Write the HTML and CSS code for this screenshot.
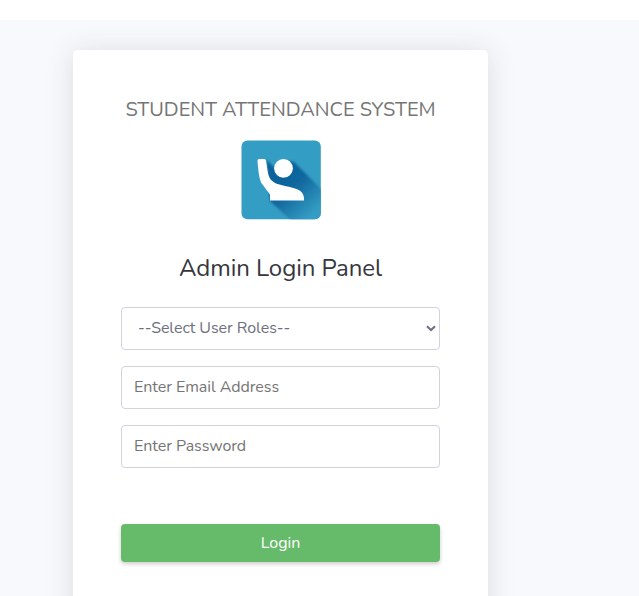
FILE: index.html
```html
<!DOCTYPE html>
<html lang="en">
<head>
<meta charset="utf-8">
<title>Student Attendance System</title>
<link rel="stylesheet" href="styles.css">
</head>
<body>
<main class="page">
  <section class="card">
    <h5 class="system"><span>STUDENT ATTENDANCE SYSTEM</span></h5>
    <svg class="logo" viewBox="0 0 80 80" aria-hidden="true">
      <defs>
        <linearGradient id="shade" gradientUnits="userSpaceOnUse" x1="40" y1="36" x2="73" y2="73">
          <stop offset="0" stop-color="#0c639c"/>
          <stop offset=".35" stop-color="#12689f"/>
          <stop offset="1" stop-color="#349dc3"/>
        </linearGradient>
        <clipPath id="tile"><rect x="0.5" y="0.4" width="79.3" height="78.800" rx="6"/></clipPath>
        <filter id="soft" x="-10%" y="-10%" width="120%" height="120%"><feGaussianBlur stdDeviation=".8"/></filter>
      </defs>
      <g clip-path="url(#tile)">
        <rect width="81" height="80" fill="#349dc3"/>
        <path d="M25.500 20 36 30 48 21 53 22 85 54V84H54L29 61Z" fill="url(#shade)" filter="url(#soft)"/>
      </g>
      <path d="M17.700 19h5.500q1.700 0 1.900 2l1.500 10c1 7 4 11 10 13 7 2.500 16 3 21 6 4 2 5.500 5 5.500 10.500H29V54.500L20 42.500C17.500 36 17.200 28 16.500 21.500Q16.300 19 17.700 19Z" fill="#fff"/>
      <circle cx="42.500" cy="28.300" r="9.400" fill="#fff"/>
    </svg>
    <h1 class="heading"><span>Admin Login Panel</span></h1>
    <form class="form">
      <div class="field select"><span class="roles">--Select User Roles--</span>
        <svg class="arrow" viewBox="0 0 10 7" aria-hidden="true"><path d="M1 1.200 5 5 9 1.200" fill="none" stroke="#6e707e" stroke-width="2"/></svg>
      </div>
      <input class="field email" type="text" placeholder="Enter Email Address" aria-label="Email">
      <input class="field password" type="password" placeholder="Enter Password" aria-label="Password">
      <button class="login" type="button">Login</button>
    </form>
  </section>
</main>
</body>
</html>
```
FILE: styles.css
```css
* { box-sizing: border-box; }
body {
  margin: 0;
  padding-top: 20px;
  background: #fff;
  font-family: Nunito, Lato, sans-serif;
  font-size: 16px;
}
.page {
  height: calc(100vh - 20px);
  overflow: hidden;
  padding: 30px 0 0 73px;
  background: #f8f9fd;
}
.card {
  width: 415px;
  height: 600px;
  padding: 48px 48px 0;
  border-radius: 5px;
  background: #fff;
  box-shadow: 0 2.400px 28px rgba(58, 59, 69, .15);
  display: flex;
  flex-direction: column;
  align-items: center;
}
.system {
  flex: none;
  margin: 0;
  height: 42px;
  font-size: 20px;
  font-weight: 400;
  line-height: 24px;
  letter-spacing: -.05px;
  white-space: nowrap;
  color: #757575;
}
.logo { width: 80px; height: 80px; flex: none; }
.heading {
  flex: none;
  margin: 34px 0 23px;
  height: 30px;
  font-size: 24px;
  font-weight: 400;
  line-height: 29px;
  letter-spacing: -.05px;
  white-space: nowrap;
  color: #35373d;
}
.form { width: 319px; display: flex; flex-direction: column; gap: 16px; }
.field {
  width: 100%;
  height: 43px;
  padding: 0 12px 2px;
  border: 1px solid #d1d3e2;
  border-radius: 4px;
  background: #fff;
  font: inherit;
  letter-spacing: -.06px;
  color: #6e707e;
}
.field::placeholder { color: #757575; opacity: 1; }
.select {
  display: flex;
  align-items: center;
  justify-content: space-between;
  padding: 0 3px 0 16px;
}
.roles { padding-bottom: 2px; }
.arrow { width: 10px; height: 7px; }
.login {
  height: 38px;
  margin-top: 40px;
  padding: 0;
  border: 0;
  border-radius: 4px;
  background: #66bb6a;
  box-shadow: 0 2px 4px rgba(0, 0, 0, .2);
  color: #fff;
  font: inherit;
}
```
